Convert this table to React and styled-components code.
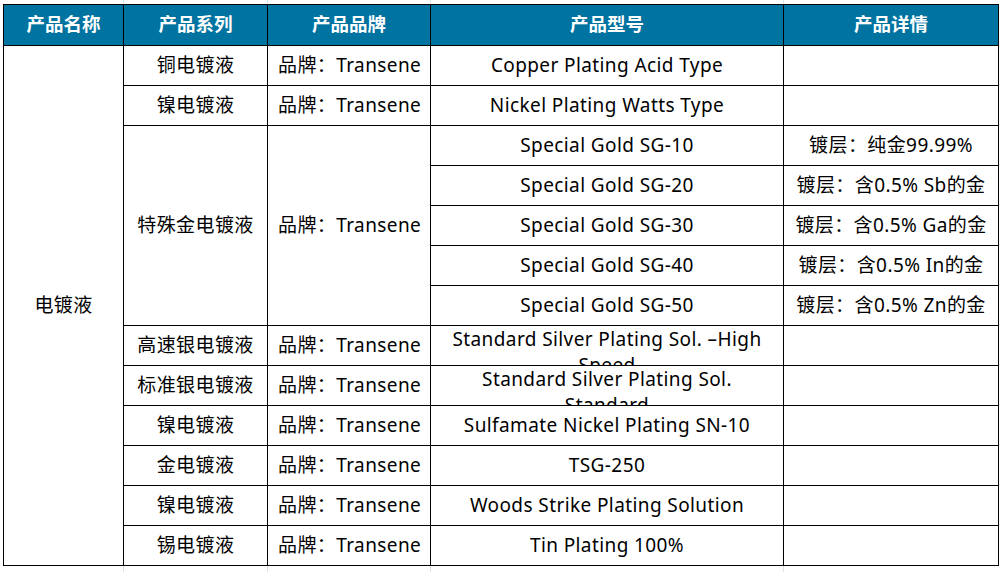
import React from 'react'
import styled, { createGlobalStyle } from 'styled-components'

const GlobalStyle = createGlobalStyle`
  html, body {
    margin: 0;
    padding: 0;
    background-color: #ffffff;
  }
  body {
    font-family: "Noto Sans", "Noto Sans CJK SC", sans-serif;
    background-image:
      linear-gradient(to right, transparent 123px, #e3e3e3 123px, #e3e3e3 124px, transparent 124px),
      linear-gradient(to right, transparent 267px, #e3e3e3 267px, #e3e3e3 268px, transparent 268px),
      linear-gradient(to right, transparent 430px, #e3e3e3 430px, #e3e3e3 431px, transparent 431px),
      linear-gradient(to right, transparent 783px, #e3e3e3 783px, #e3e3e3 784px, transparent 784px);
    min-height: 572px;
  }
`

const Page = styled.div`
  padding: 4px 0 0 3px;
`

const Grid = styled.div`
  display: grid;
  grid-template-columns: 120px 144px 163px 353px 215px;
  grid-template-rows: 41px repeat(13, 40px);
  width: max-content;
  border-top: 1px solid #000;
  border-left: 1px solid #000;
  background: #fff;
`

const Cell = styled.div`
  box-sizing: border-box;
  grid-row: span ${props => props.rows || 1};
  display: flex;
  align-items: ${props => (props.wrap ? 'flex-start' : 'center')};
  justify-content: ${props => (props.left ? 'flex-start' : 'center')};
  padding: ${props => (props.wrap ? '0 20px' : props.left ? '0 0 2px 10px' : '0 4px 2px')};
  border-right: 1px solid #000;
  border-bottom: 1px solid #000;
  overflow: hidden;
  font-size: 19px;
  line-height: 26px;
  letter-spacing: 0.4px;
  color: #000;
  text-align: center;
`

const HeadCell = styled(Cell)`
  padding-bottom: 4px;
  background-color: #0073a0;
  color: #ffffff;
  font-weight: 700;
  font-family: "Noto Sans CJK SC", sans-serif;
  font-size: 18.5px;
  letter-spacing: 0;
`

const headers = ['产品名称', '产品系列', '产品品牌', '产品型号', '产品详情']

const gold = [
  ['Special Gold SG-10', '镀层：纯金99.99%'],
  ['Special Gold SG-20', '镀层：含0.5% Sb的金'],
  ['Special Gold SG-30', '镀层：含0.5% Ga的金'],
  ['Special Gold SG-40', '镀层：含0.5% In的金'],
  ['Special Gold SG-50', '镀层：含0.5% Zn的金'],
]

const after = [
  ['高速银电镀液', 'Standard Silver Plating Sol. –High Speed', true],
  ['标准银电镀液', 'Standard Silver Plating Sol. Standard', true],
  ['镍电镀液', 'Sulfamate Nickel Plating SN-10'],
  ['金电镀液', 'TSG-250'],
  ['镍电镀液', 'Woods Strike Plating Solution'],
  ['锡电镀液', 'Tin Plating 100%'],
]

const Brand = () => <Cell left>品牌：Transene</Cell>

const App = () => (
  <Page>
    <GlobalStyle />
    <Grid>
      {headers.map(h => (
        <HeadCell key={h}>{h}</HeadCell>
      ))}

      <Cell rows={13}>电镀液</Cell>
      <Cell>铜电镀液</Cell>
      <Brand />
      <Cell>Copper Plating Acid Type</Cell>
      <Cell />

      <Cell>镍电镀液</Cell>
      <Brand />
      <Cell>Nickel Plating Watts Type</Cell>
      <Cell />

      <Cell rows={5}>特殊金电镀液</Cell>
      <Cell rows={5} left>品牌：Transene</Cell>
      {gold.map(([model, detail]) => (
        <React.Fragment key={model}>
          <Cell>{model}</Cell>
          <Cell>{detail}</Cell>
        </React.Fragment>
      ))}

      {after.map(([series, model, wrap]) => (
        <React.Fragment key={model}>
          <Cell>{series}</Cell>
          <Brand />
          <Cell wrap={wrap ? 1 : 0}>{model}</Cell>
          <Cell />
        </React.Fragment>
      ))}
    </Grid>
  </Page>
)

export default App
